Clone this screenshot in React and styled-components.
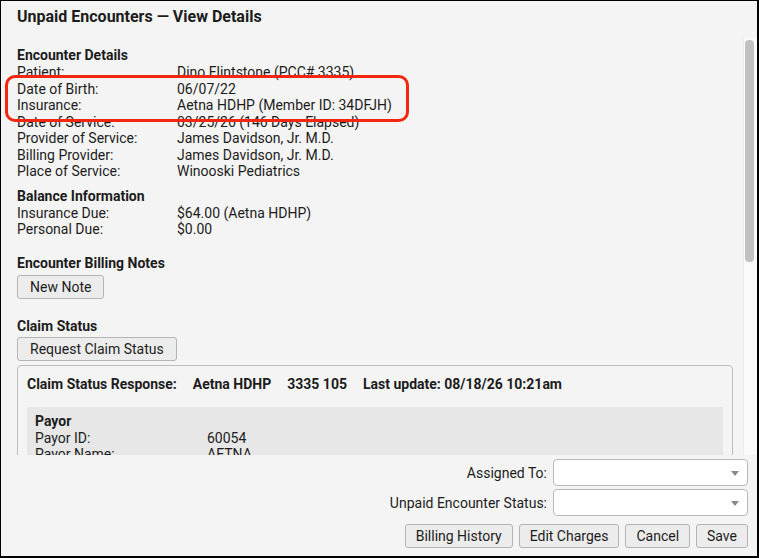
import React from "react";
import styled, { createGlobalStyle } from "styled-components";

const GlobalStyle = createGlobalStyle`
  html, body {
    margin: 0;
    padding: 0;
    background: #ffffff;
  }
  body {
    font-family: Roboto, "Liberation Sans", Arial, sans-serif;
    color: #1c1c1c;
  }
  * {
    box-sizing: border-box;
  }
`;

const Dialog = styled.div`
  position: relative;
  width: 759px;
  height: 558px;
  border: 1px solid #000;
  border-right-width: 2px;
  border-bottom-width: 2px;
  background: #f4f4f4;
  display: flex;
  flex-direction: column;
  overflow: hidden;
`;

const Title = styled.h1`
  margin: 0;
  height: 37px;
  padding: 6px 0 0 16px;
  font-size: 16px;
  font-weight: 700;
  line-height: 19px;
`;

const Body = styled.div`
  flex: 1;
  min-height: 0;
  display: flex;
`;

const Content = styled.div`
  flex: 1;
  min-width: 0;
  overflow: hidden;
  padding: 9px 10px 0 16px;
  font-size: 14px;
`;

const Track = styled.div`
  flex: none;
  width: 14px;
  background: #fafafa;
  border-left: 1px solid #ececec;
  padding: 2px 3px 0 1px;
`;

const Thumb = styled.div`
  height: 222px;
  background: #c1c1c1;
  border-radius: 4px;
`;

const Heading = styled.div`
  font-weight: 700;
  line-height: 17px;
  margin-top: ${(p) => p.$gap || 0}px;
`;

const Rows = styled.div`
  display: grid;
  grid-template-columns: ${(p) => p.$label || 160}px 1fr;
  line-height: 16.5px;
`;

const Button = styled.button`
  font-family: inherit;
  font-size: 14px;
  color: #1c1c1c;
  height: 24px;
  padding: 0 ${(p) => p.$pad || 10}px;
  background: #ececec;
  border: 1px solid #b4b4b4;
  border-radius: 3px;
  margin-top: ${(p) => p.$gap || 0}px;
  cursor: pointer;
`;

const ClaimBox = styled.div`
  margin-top: 4px;
  border: 1px solid #bdbdbd;
  border-radius: 4px;
  padding: 10px 9px 10px 9px;
`;

const ClaimHeader = styled.div`
  display: flex;
  gap: 16px;
  font-weight: 700;
  line-height: 17px;
`;

const GreyBlock = styled.div`
  background: #e7e7e7;
  border-radius: 2px;
  margin-top: ${(p) => p.$gap || 6}px;
  padding: 6px 8px 8px 8px;
`;

const Footer = styled.div`
  flex: none;
  height: 101px;
  padding: 4px 9px 0 0;
  display: flex;
  flex-direction: column;
  align-items: flex-end;
`;

const Field = styled.div`
  display: flex;
  align-items: center;
  gap: 6px;
  margin-bottom: 3px;
  font-size: 14px;
`;

const Select = styled.div`
  position: relative;
  width: 195px;
  height: 27px;
  background: #ffffff;
  border: 1px solid #b9b9b9;
  border-radius: 4px;

  &::after {
    content: "";
    position: absolute;
    right: 8px;
    top: 11px;
    border-left: 4px solid transparent;
    border-right: 4px solid transparent;
    border-top: 5px solid #8a8a8a;
  }
`;

const Actions = styled.div`
  display: flex;
  gap: 6px;
  margin-top: 5px;
`;

const Highlight = styled.div`
  position: absolute;
  left: 4px;
  top: 74px;
  width: 404px;
  height: 47px;
  border: 3px solid #f3260f;
  border-radius: 10px;
  pointer-events: none;
`;

const encounter = [
  ["Patient:", "Dino Flintstone (PCC# 3335)"],
  ["Date of Birth:", "06/07/22"],
  ["Insurance:", "Aetna HDHP (Member ID: 34DFJH)"],
  ["Date of Service:", "03/25/26 (146 Days Elapsed)"],
  ["Provider of Service:", "James Davidson, Jr. M.D."],
  ["Billing Provider:", "James Davidson, Jr. M.D."],
  ["Place of Service:", "Winooski Pediatrics"],
];

const balance = [
  ["Insurance Due:", "$64.00 (Aetna HDHP)"],
  ["Personal Due:", "$0.00"],
];

const claimGroups = [
  {
    title: "Payor",
    rows: [
      ["Payor ID:", "60054"],
      ["Payor Name:", "AETNA"],
    ],
  },
  {
    title: "Provider",
    rows: [
      ["Provider Name:", "Winooski Pediatrics"],
      ["NPI:", "1234567893"],
    ],
  },
];

const InfoRows = ({ rows, label }) => (
  <Rows $label={label}>
    {rows.map(([k, v]) => (
      <React.Fragment key={k}>
        <span>{k}</span>
        <span>{v}</span>
      </React.Fragment>
    ))}
  </Rows>
);

const App = () => {
  return (
    <>
      <GlobalStyle />
      <Dialog>
        <Title>Unpaid Encounters — View Details</Title>
        <Body>
          <Content>
            <Heading>Encounter Details</Heading>
            <InfoRows rows={encounter} />

            <Heading $gap={8}>Balance Information</Heading>
            <InfoRows rows={balance} />

            <Heading $gap={17}>Encounter Billing Notes</Heading>
            <Button $gap={3} $pad={12}>New Note</Button>

            <Heading $gap={19}>Claim Status</Heading>
            <Button $gap={2} $pad={12}>Request Claim Status</Button>

            <ClaimBox>
              <ClaimHeader>
                <span>Claim Status Response:</span>
                <span>Aetna HDHP</span>
                <span>3335 105</span>
                <span>Last update: 08/18/26 10:21am</span>
              </ClaimHeader>
              {claimGroups.map((g, i) => (
                <GreyBlock key={g.title} $gap={i === 0 ? 14 : 6}>
                  <Heading>{g.title}</Heading>
                  <InfoRows rows={g.rows} label={172} />
                </GreyBlock>
              ))}
            </ClaimBox>
          </Content>
          <Track>
            <Thumb />
          </Track>
        </Body>

        <Footer>
          <Field>
            <span>Assigned To:</span>
            <Select />
          </Field>
          <Field>
            <span>Unpaid Encounter Status:</span>
            <Select />
          </Field>
          <Actions>
            <Button>Billing History</Button>
            <Button>Edit Charges</Button>
            <Button>Cancel</Button>
            <Button>Save</Button>
          </Actions>
        </Footer>

        <Highlight />
      </Dialog>
    </>
  );
};

export default App;
